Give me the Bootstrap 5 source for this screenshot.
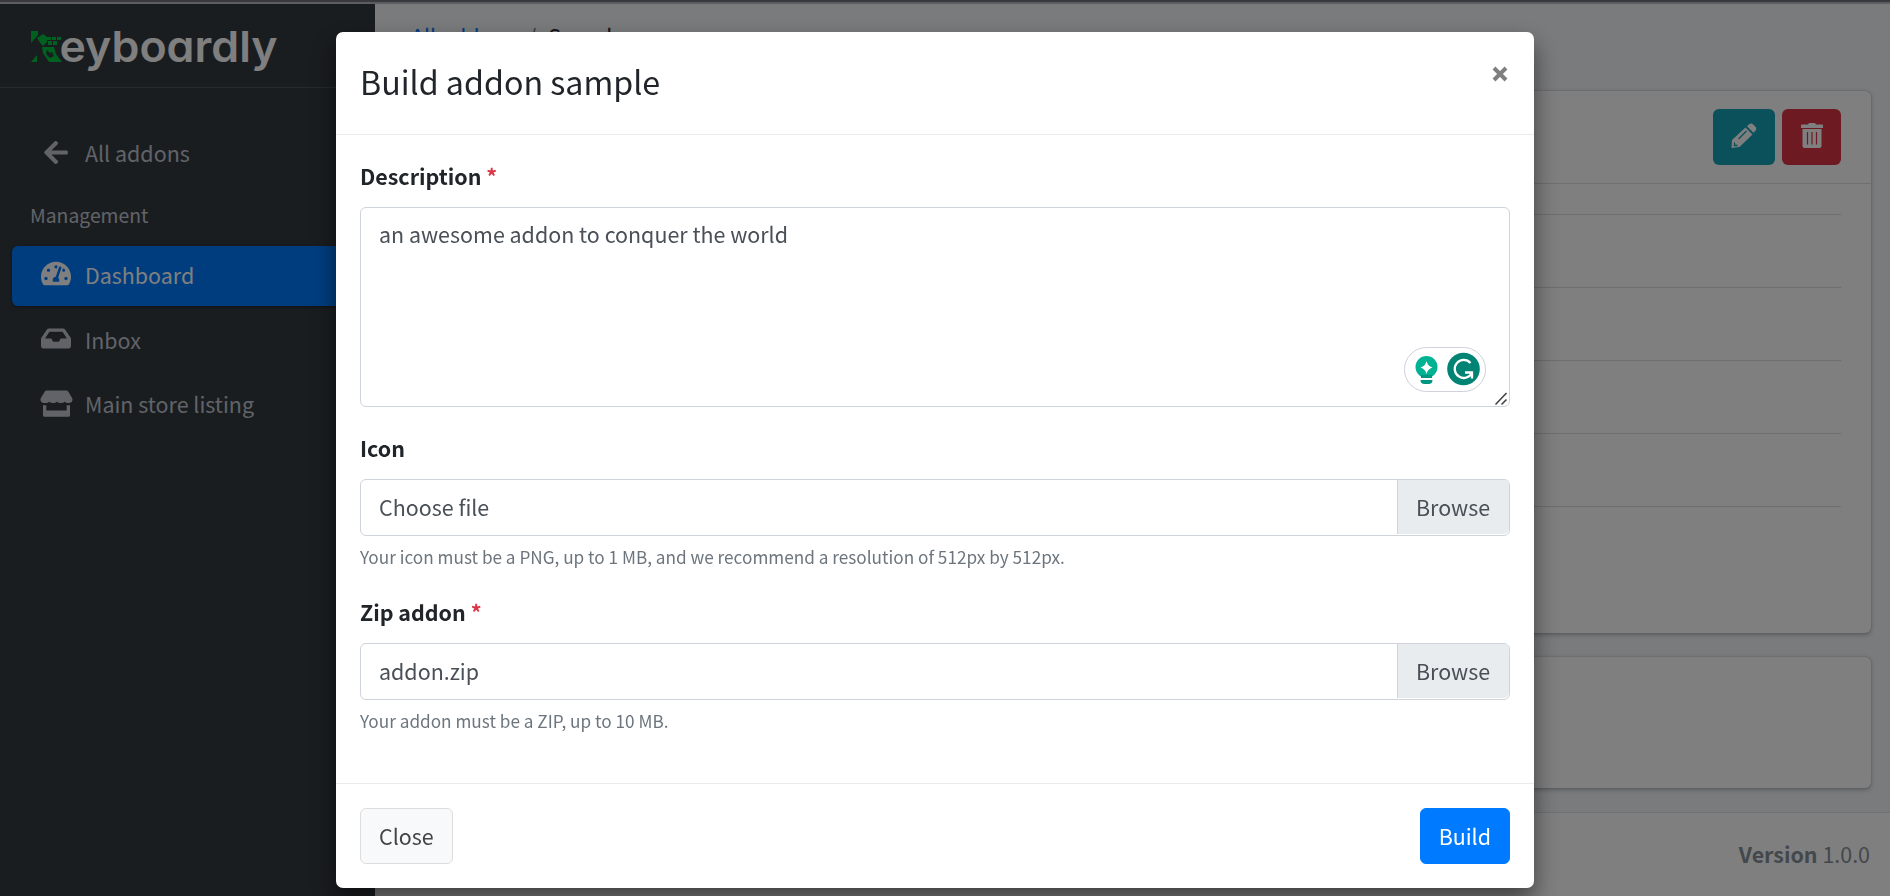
<!DOCTYPE html>
<html lang="en">
<head>
<meta charset="utf-8">
<meta name="viewport" content="width=device-width, initial-scale=1">
<title>Keyboardly – Build addon</title>
<link rel="stylesheet" href="https://cdn.jsdelivr.net/npm/bootstrap@5.3.0/dist/css/bootstrap.min.css">
<script src="https://cdn.jsdelivr.net/npm/bootstrap@5.3.0/dist/js/bootstrap.bundle.min.js"></script>
<style>
html{font-size:24px}
body{font-family:"Noto Sans CJK SC",sans-serif;font-size:21.45px;line-height:36px;color:#212529;background:#f4f6f9;height:100vh;overflow:hidden}
.top-strip{height:4px;background:#5c5d61;border-top:2px solid #38393d;z-index:2000}
.side{width:375px;background:#343a40;color:#c2c7d0;flex:none}
.brand{height:84px;border-bottom:1px solid #4b545c;padding:12px 0 0 30px}
.brand svg{display:block}
.side .nav{padding:35px 12px 0}
.side .nav-link{height:60px;margin-bottom:4.8px;padding:0 0 2px 29px;color:inherit;border-radius:6px;gap:14px}
.side .nav-link:first-child{padding-bottom:0}
.side .nav-link svg{width:30px;height:27px;flex:none;fill:currentColor;margin-bottom:2px}
.side .nav-link svg.wide{width:33px;margin:0 -1.5px 1px}
.side .nav-link.active{background:#007bff;color:#fff;box-shadow:0 1px 3px rgba(0,0,0,.4)}
.nav-head{font-size:19.35px;height:58px;line-height:55px;padding-left:18px}
.crumb{height:87px;padding:14px 0 0 36px}
.crumb .crumb-link{color:#007bff;text-decoration:none}
.panel{background:#fff;border-radius:6px;box-shadow:0 0 1.5px rgba(0,0,0,.2),0 1.5px 4.5px rgba(0,0,0,.25);margin:0 19px 24px 24px}
.panel-top{height:93px;border-bottom:1px solid #dfdfdf;padding:18px 30px;gap:7px}
.ib{height:56px;border:0;border-radius:6px;display:flex;align-items:center;justify-content:center;padding:0 0 3px}
.rule{border-top:1px solid #dcdcdc;margin:0 30px;height:73px}
.foot{background:#fff;border-top:1px solid #dee2e6;color:#869099;padding:23px 20px}
.modal-backdrop.show{width:100vw;height:100vh}
.modal{overflow:hidden}
.modal-dialog{width:1198px;max-width:none;margin:32px 0 0 336px}
.modal-content{height:856px;border:0;border-radius:7px;box-shadow:0 12px 24px rgba(0,0,0,.5)}
.modal-header{height:103px;padding:24px;border-color:#e9ecef}
.modal-title{font-size:32.2px;line-height:50px;font-weight:400}
.modal-body{padding:24px}
.modal-footer{height:105px;padding:24px;border-color:#e9ecef;flex:none}
.modal-footer>*{margin:0}
.x{border:0;background:none;padding:0;width:18px;height:36px;color:#7f7f7f}
.field{margin-bottom:24px}
.form-label{font-weight:700;line-height:34px;margin-bottom:14px;display:block}
.req{color:#dc3545}
.form-control{font-size:21.45px;line-height:36px;color:#495057;border-color:#ced4da;border-radius:6px;padding:8px 18px}
textarea.form-control{height:200px;resize:none}
.grip{right:1px;bottom:1px}
.pick{height:57px;border:1px solid #ced4da;border-radius:6px;color:#495057;padding-left:18px;line-height:54px}
.pick b{font-weight:400;width:112px;height:54px;background:#e9ecef;border-left:1px solid #ced4da;border-radius:0 5px 5px 0;padding-left:18px}
.hint{font-size:17.2px;line-height:29px;color:#6c757d;margin-top:6px}
.gram{right:24px;bottom:15px;width:82px;height:45px;border:1.5px solid #d0d1dc;border-radius:23px;background:#fff}
.act{font-size:21.45px;line-height:36px;height:56px;padding:8px 18px;border-radius:6px}
</style>
</head>
<body class="d-flex flex-column">
<div class="top-strip position-relative flex-shrink-0"></div>
<div class="d-flex flex-grow-1">
  <aside class="side">
    <div class="brand">
      <svg width="250" height="64" viewBox="0 -15 250 64">
        <path fill="#00c040" d="M1 0h7v4L1 12zM7 7l6-4 4 3 0 5-4 4-2-2zM17 6h4v3h-4zM22 6h4v3h-4zM27 6h4v3h-4zM18 10h4v4h-4zM23 10h4v4h-4z"/><path fill="#00c040" fill-rule="evenodd" d="M12 16h12l2 7 6 8H19l-6-9zM17 19l-1 4 4 4 4-2-2-4-2 1zM7 24v7H1z"/>
        <text x="29.5" y="30.500" textLength="218" lengthAdjust="spacingAndGlyphs" font-family="Inter" font-weight="600" font-size="43" fill="#fff" style="font-feature-settings:'cv11'">eyboardly</text>
      </svg>
    </div>
    <nav class="nav flex-column flex-nowrap">
      <a class="nav-link d-flex align-items-center"><svg viewBox="0 0 448 512"><path d="M257.5 445.1l-22.2 22.2c-9.4 9.4-24.6 9.4-33.9 0L7 273c-9.4-9.4-9.4-24.6 0-33.9L201.4 44.7c9.4-9.4 24.6-9.4 33.9 0l22.2 22.2c9.5 9.5 9.3 25-.4 34.3L136.6 216H424c13.3 0 24 10.7 24 24v32c0 13.3-10.7 24-24 24H136.6l120.5 114.8c9.8 9.3 10 24.8.4 34.3z"/></svg><span>All addons</span></a>
      <div class="nav-head">Management</div>
      <a class="nav-link active d-flex align-items-center"><svg viewBox="0 0 576 512"><path d="M288 32C128.94 32 0 160.94 0 320c0 52.8 14.25 102.26 39.06 144.8 5.61 9.62 16.3 15.2 27.44 15.2h443c11.14 0 21.83-5.58 27.44-15.2C561.75 422.26 576 372.8 576 320c0-159.06-128.94-288-288-288zm0 64c14.71 0 26.58 10.13 30.32 23.65-1.11 2.26-2.64 4.23-3.45 6.67l-9.22 27.67c-5.13 3.49-10.97 6.01-17.64 6.01-17.67 0-32-14.33-32-32S270.33 96 288 96zM96 384c-17.67 0-32-14.33-32-32s14.33-32 32-32 32 14.33 32 32-14.33 32-32 32zm48-160c-17.67 0-32-14.33-32-32s14.33-32 32-32 32 14.33 32 32-14.33 32-32 32zm246.77-72.41l-61.33 184C343.13 347.33 352 364.54 352 384c0 11.72-3.38 22.55-8.88 32H232.88c-5.500-9.45-8.88-20.28-8.88-32 0-33.94 26.5-61.43 59.9-63.59l61.34-184.01c4.17-12.56 17.73-19.45 30.36-15.17 12.57 4.19 19.35 17.79 15.17 30.36zm14.66 57.2l15.52-46.55c3.47-1.29 7.13-2.23 11.05-2.23 17.67 0 32 14.33 32 32s-14.33 32-32 32c-11.38-.01-20.89-6.28-26.57-15.22zM480 384c-17.67 0-32-14.33-32-32s14.33-32 32-32 32 14.33 32 32-14.33 32-32 32z"/></svg><span>Dashboard</span></a>
      <a class="nav-link d-flex align-items-center"><svg viewBox="0 0 576 512"><path d="M567.938 243.908L462.25 85.374A48.003 48.003 0 0 0 422.311 64H153.689a48 48 0 0 0-39.938 21.374L8.062 243.908A47.994 47.994 0 0 0 0 270.533V400c0 26.51 21.49 48 48 48h480c26.51 0 48-21.49 48-48V270.533a47.994 47.994 0 0 0-8.062-26.625zM162.252 128h251.497l85.333 128H376l-32 64H232l-32-64H76.918l85.334-128z"/></svg><span>Inbox</span></a>
      <a class="nav-link d-flex align-items-center"><svg class="wide" viewBox="0 1.500 33 27.500" preserveAspectRatio="none"><path d="M6.500 2h20q1 0 1.500.8l4 6.500c1.500 3-.3 5.500-3.500 5.500-1.600 0-2.900-.5-3.800-1.300-2 1.800-5.800 1.800-7.700 0-2 1.800-5.700 1.800-7.700 0-.9.800-2.200 1.300-3.800 1.300C1.300 14.800-.5 12.300 1 9.300l4-6.500Q5.500 2 6.500 2zM3 17q1.700.3 3.300 0v5.500h20.400V17q1.700.3 3.300 0v10.500q0 1.300-1.600 1.300H4.600Q3 28.800 3 27.500z"/></svg><span>Main store listing</span></a>
    </nav>
  </aside>
  <main class="flex-grow-1 d-flex flex-column">
    <div class="crumb"><a class="crumb-link">All addons</a><span class="text-secondary px-2">/</span>Sample</div>
    <section class="panel" style="height:542px">
      <div class="panel-top d-flex justify-content-end">
        <button class="ib" style="width:62px;background:#17a2b8"><svg width="26" height="26" viewBox="0 0 26 26"><path fill="#fff" d="M.5 25l.5-8L14.500 4.500l7 7L8.500 24zM16 3.200l2-2q2-1.500 4 0l2.500 2.500q1.500 2 0 4l-2 2z"/><path d="M7.500 16l8-8M3.500 19.500v3h3" fill="none" stroke="#17a2b8" stroke-width="1.300"/></svg></button>
        <button class="ib" style="width:59px;background:#dc3545"><svg width="22" height="25" viewBox="0 0 22 25"><path fill="#fff" d="M1 1.500h6L8 0h6l1 1.500h6q1 0 1 1V5H0V2.500q0-1 1-1zM1.500 6h19v17q0 2-2 2h-15q-2 0-2-2z"/><path d="M6.500 9v12.500M11 9v12.500M15.500 9v12.500" stroke="#dc3545" stroke-width="1.200"/></svg></button>
      </div>
      <div style="height:30px"></div>
      <div class="rule"></div><div class="rule"></div><div class="rule"></div><div class="rule"></div><div class="rule"></div>
    </section>
    <section class="panel" style="height:131px"></section>
    <footer class="foot text-end flex-grow-1"><b>Version</b> 1.0.0</footer>
  </main>
</div>
<div class="modal-backdrop show"></div>
<div class="modal show d-block" tabindex="-1">
  <div class="modal-dialog">
    <div class="modal-content">
      <div class="modal-header align-items-start">
        <h4 class="modal-title">Build addon sample</h4>
        <button class="x" aria-label="Close"><svg class="d-block" width="16" height="16" viewBox="0 0 16 16"><path d="M2 2l12 12M14 2L2 14" stroke="currentColor" stroke-width="4"/></svg></button>
      </div>
      <div class="modal-body">
        <div class="field">
          <label class="form-label">Description <span class="req">*</span></label>
          <div class="position-relative">
            <textarea class="form-control d-block">an awesome addon to conquer the world</textarea>
            <svg class="grip position-absolute" width="15" height="15" viewBox="0 0 15 15"><path d="M1.500 13.500l11-11.500M7.500 13.500l5-5" stroke="#444" stroke-width="1.600"/></svg>
            <div class="gram position-absolute">
              <svg class="d-block" width="79" height="42" viewBox="0 0 79 42"><circle cx="21.500" cy="19" r="11" fill="#00b294"/><path d="M16 27h11v3H16zM15.500 32h12q0 4-4 4h-4q-4 0-4-4z" fill="#009680"/><path d="M21.500 13q1 5 6 6.500-5 1.500-6 6.500-1-5-6-6.500 5-1.500 6-6.500z" fill="#fff"/><circle cx="58.500" cy="21" r="16.300" fill="#028475"/><path d="M65.500 15A9 9 0 1 0 67 24.500M60 24.500h7v6" fill="none" stroke="#fff" stroke-width="2.300"/></svg>
            </div>
          </div>
        </div>
        <div class="field">
          <label class="form-label">Icon</label>
          <div class="pick d-flex justify-content-between"><span>Choose file</span><b>Browse</b></div>
          <div class="hint">Your icon must be a PNG, up to 1 MB, and we recommend a resolution of 512px by 512px.</div>
        </div>
        <div>
          <label class="form-label">Zip addon <span class="req">*</span></label>
          <div class="pick d-flex justify-content-between"><span>addon.zip</span><b>Browse</b></div>
          <div class="hint">Your addon must be a ZIP, up to 10 MB.</div>
        </div>
      </div>
      <div class="modal-footer justify-content-between">
        <button class="btn act" style="background:#f8f9fa;border-color:#ddd;color:#444">Close</button>
        <button class="btn act text-white" style="background:#007bff;border-color:#007bff">Build</button>
      </div>
    </div>
  </div>
</div>
</body>
</html>
